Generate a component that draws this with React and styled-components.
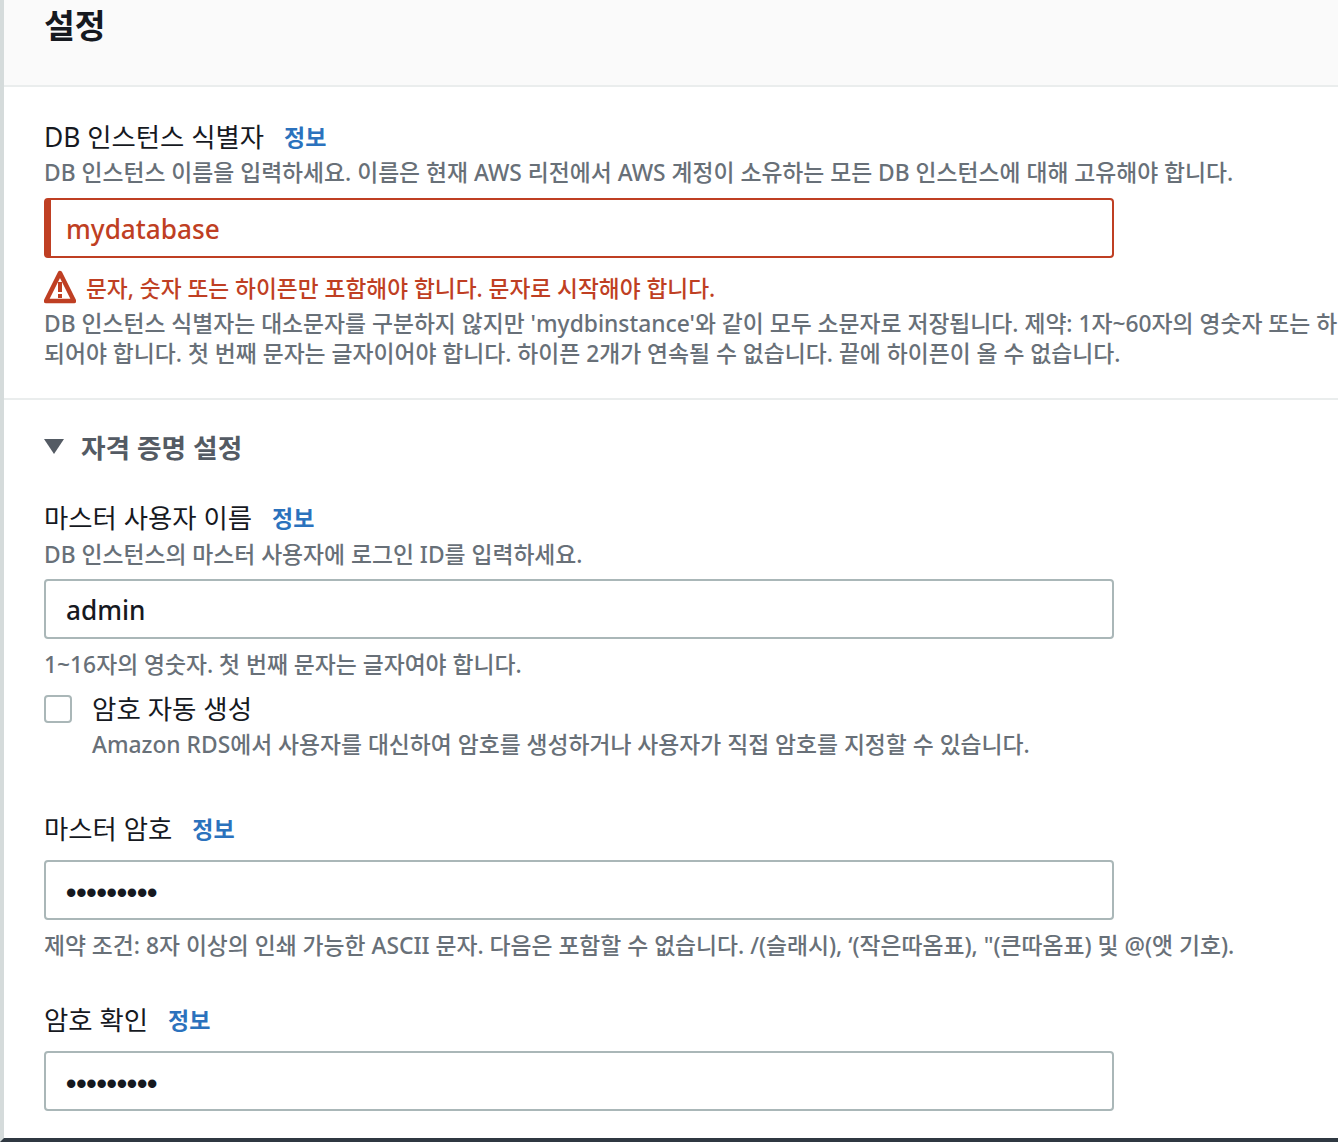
import React from 'react'
import styled, { createGlobalStyle } from 'styled-components'

const GlobalStyle = createGlobalStyle`
  html, body {
    margin: 0;
    padding: 0;
    height: 1142px;
    overflow: hidden;
    background: #ffffff;
    font-family: "Noto Sans", "Noto Sans CJK KR", sans-serif;
  }
`

const Page = styled.div`
  width: 1338px;
  height: 1142px;
  box-sizing: border-box;
  overflow: hidden;
  display: flex;
  flex-direction: column;
  border-left: 4px solid #d5dbdb;
  border-bottom: 4px solid #2f3841;
`

const Header = styled.header`
  height: 87px;
  flex: none;
  box-sizing: border-box;
  padding: 0 40px;
  background: #fafafa;
  border-bottom: 2px solid #eaeded;
`

const Title = styled.h2`
  margin: 0;
  font-size: 33.5px;
  line-height: 50px;
  font-weight: 700;
  color: #16191f;
`

const Section = styled.section`
  padding: ${p => p.$pad || '0 40px'};
  border-bottom: ${p => (p.$divided ? '2px solid #eaeded' : 'none')};
`

const Label = styled.div`
  display: flex;
  align-items: center;
  gap: 20px;
  height: 34px;
  font-size: 26.4px;
  color: #16191f;
`

const InfoLink = styled.a`
  font-size: 23px;
  font-weight: 700;
  color: #2b72bd;
  position: relative;
  top: 1px;
`

const Hint = styled.p`
  margin: ${p => p.$margin || '0'};
  font-size: 22.8px;
  font-weight: 500;
  line-height: 30px;
  color: #687078;
  white-space: nowrap;
`

const Input = styled.div`
  width: 1070px;
  height: 60px;
  box-sizing: border-box;
  display: flex;
  align-items: center;
  padding-top: 2px;
  padding-left: ${p => (p.$error ? '15px' : '20px')};
  border: 2px solid ${p => (p.$error ? '#bf3f23' : '#aab7b8')};
  border-left-width: ${p => (p.$error ? '7px' : '2px')};
  border-radius: 4px;
  font-size: 26.2px;
  font-weight: 500;
  color: ${p => (p.$error ? '#bf3f23' : '#16191f')};
  background: #ffffff;
`

const Dots = styled.span`
  padding-top: 4px;
  font-size: 29.5px;
  letter-spacing: -0.2px;
  font-family: "Liberation Sans", sans-serif;
  font-weight: 700;
`

const ErrorRow = styled.div`
  display: flex;
  align-items: center;
  gap: 10px;
  height: 32px;
  margin-top: 13px;
  font-size: 22.7px;
  font-weight: 500;
  color: #bf3f23;
  white-space: nowrap;
`

const Expander = styled.div`
  display: flex;
  align-items: center;
  gap: 17px;
  height: 36px;
  font-size: 26.7px;
  font-weight: 700;
  color: #545b64;
`

const Caret = styled.span`
  width: 0;
  height: 0;
  border-left: 10px solid transparent;
  border-right: 10px solid transparent;
  border-top: 15px solid #545b64;
`

const CheckRow = styled.div`
  display: flex;
  gap: 20px;
  margin-top: 7px;
`

const Box = styled.span`
  width: 28px;
  height: 28px;
  flex: none;
  margin-top: 8px;
  box-sizing: border-box;
  border: 2px solid #aab7b8;
  border-radius: 4px;
`

const CheckTitle = styled.div`
  font-size: 26.5px;
  line-height: 41px;
  margin-top: 2px;
  color: #16191f;
`

const Field = styled.div`
  margin-top: ${p => p.$top || '0'};
`

const WarnIcon = () => (
  <svg width="32" height="34" viewBox="0 0 32 34">
    <path d="M16 3 L30 31 H2 Z" fill="none" stroke="#bf3f23" strokeWidth="4.5" strokeLinejoin="round" />
    <rect x="14" y="12" width="4" height="10" fill="#bf3f23" />
    <rect x="14" y="24" width="4" height="4" fill="#bf3f23" />
  </svg>
)

export default function App() {
  return (
    <>
      <GlobalStyle />
      <Page>
        <Header>
          <Title>설정</Title>
        </Header>
        <Section $divided $pad="31px 40px 29px">
          <Label>DB 인스턴스 식별자 <InfoLink>정보</InfoLink></Label>
          <Hint $margin="6px 0 0">DB 인스턴스 이름을 입력하세요. 이름은 현재 AWS 리전에서 AWS 계정이 소유하는 모든 DB 인스턴스에 대해 고유해야 합니다.</Hint>
          <Field $top="10px">
            <Input $error>mydatabase</Input>
          </Field>
          <ErrorRow><WarnIcon />문자, 숫자 또는 하이픈만 포함해야 합니다. 문자로 시작해야 합니다.</ErrorRow>
          <Hint $margin="6px 0 0">DB 인스턴스 식별자는 대소문자를 구분하지 않지만 'mydbinstance'와 같이 모두 소문자로 저장됩니다. 제약: 1자~60자의 영숫자 또는 하이픈으로 구성</Hint>
          <Hint>되어야 합니다. 첫 번째 문자는 글자이어야 합니다. 하이픈 2개가 연속될 수 없습니다. 끝에 하이픈이 올 수 없습니다.</Hint>
        </Section>
        <Section $pad="28px 40px 0">
          <Expander><Caret />자격 증명 설정</Expander>
          <Field $top="35px">
            <Label>마스터 사용자 이름 <InfoLink>정보</InfoLink></Label>
            <Hint $margin="7px 0 0">DB 인스턴스의 마스터 사용자에 로그인 ID를 입력하세요.</Hint>
            <Field $top="9px"><Input>admin</Input></Field>
            <Hint $margin="11px 0 0">1~16자의 영숫자. 첫 번째 문자는 글자여야 합니다.</Hint>
          </Field>
          <CheckRow>
            <Box />
            <div>
              <CheckTitle>암호 자동 생성</CheckTitle>
              <Hint>Amazon RDS에서 사용자를 대신하여 암호를 생성하거나 사용자가 직접 암호를 지정할 수 있습니다.</Hint>
            </div>
          </CheckRow>
          <Field $top="50px">
            <Label>마스터 암호 <InfoLink>정보</InfoLink></Label>
            <Field $top="16px"><Input><Dots>•••••••••</Dots></Input></Field>
            <Hint $margin="11px 0 0">제약 조건: 8자 이상의 인쇄 가능한 ASCII 문자. 다음은 포함할 수 없습니다. /(슬래시), ‘(작은따옴표), "(큰따옴표) 및 @(앳 기호).</Hint>
          </Field>
          <Field $top="40px">
            <Label>암호 확인 <InfoLink>정보</InfoLink></Label>
            <Field $top="16px"><Input><Dots>•••••••••</Dots></Input></Field>
          </Field>
        </Section>
      </Page>
    </>
  )
}
